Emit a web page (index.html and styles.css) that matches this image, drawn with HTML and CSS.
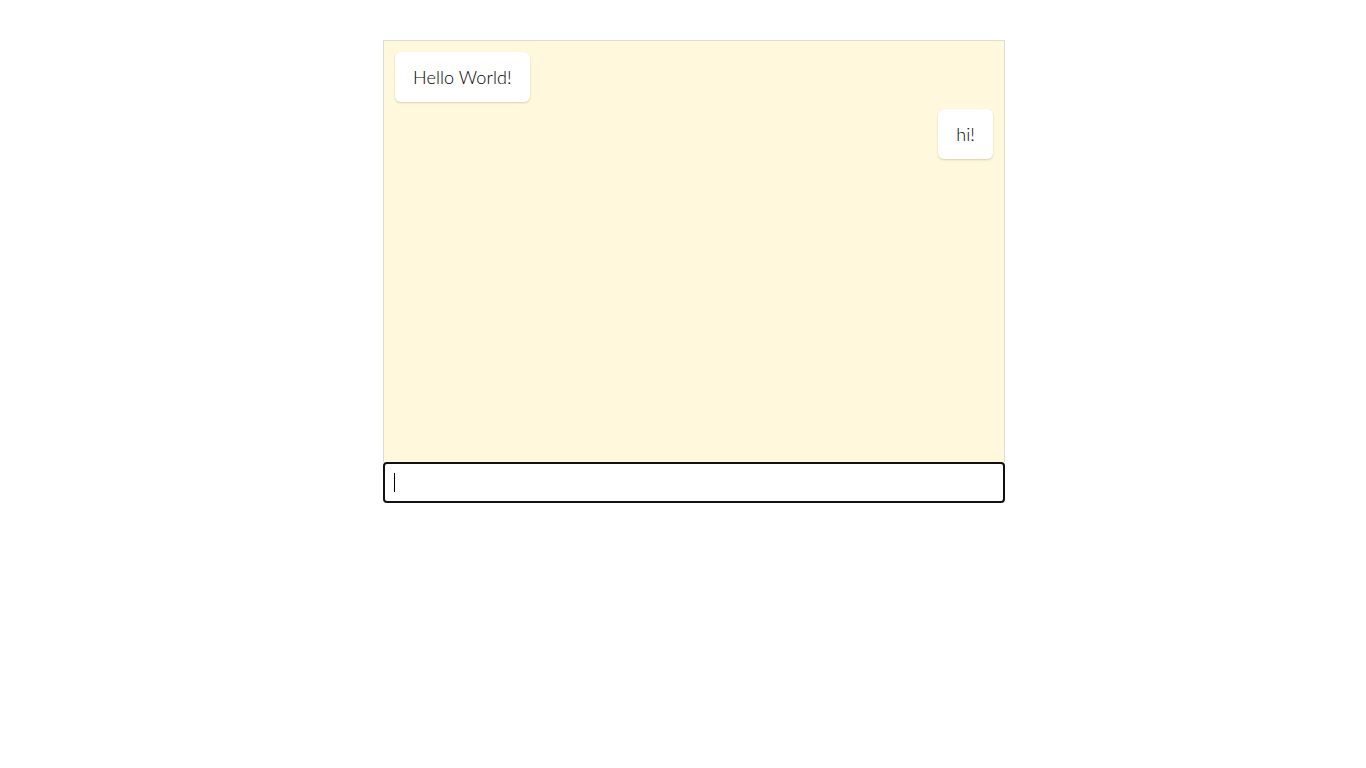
FILE: index.html
```html
<!DOCTYPE html>
<html>
<head>
<meta charset="utf-8">
<link rel="stylesheet" href="styles.css">
</head>
<body>
<div class="chat">
  <div class="messages">
    <div class="msg left">Hello World!</div>
    <div class="msg right">hi!</div>
  </div>
  <div class="entry-wrap">
    <input class="entry" type="text" autofocus>
    <span class="caret"></span>
  </div>
</div>
</body>
</html>
```
FILE: styles.css
```css
html, body {
  margin: 0;
  padding: 0;
  background: #fff;
}
body {
  font-family: "Lato", "Open Sans", sans-serif;
  font-weight: 300;
  color: #000;
}
.chat {
  width: 622px;
  margin: 40px 0 0 383px;
  display: flex;
  flex-direction: column;
}
.messages {
  height: 422px;
  box-sizing: border-box;
  border: 1px solid #e0ddd0;
  border-bottom: none;
  background: #fff8dc;
  padding: 11px 11px;
  display: flex;
  flex-direction: column;
  gap: 7px;
}
.msg {
  background: #fff;
  border-radius: 6px;
  box-shadow: 0 1px 2px rgba(150, 130, 80, 0.35);
  padding: 0 18px;
  height: 50px;
  line-height: 50px;
  font-size: 18px;
  letter-spacing: 0.1px;
}
.left { align-self: flex-start; }
.right { align-self: flex-end; }
.entry-wrap {
  position: relative;
}
.entry {
  display: block;
  box-sizing: border-box;
  width: 622px;
  height: 41px;
  margin: 0;
  border: 2px solid #111;
  border-radius: 4px;
  outline: none;
  padding: 0 9px;
  font-family: inherit;
  font-size: 18px;
  background: #fff;
  caret-color: transparent;
}
.caret {
  position: absolute;
  left: 11px;
  top: 11px;
  width: 1px;
  height: 19px;
  background: #000;
}
```
